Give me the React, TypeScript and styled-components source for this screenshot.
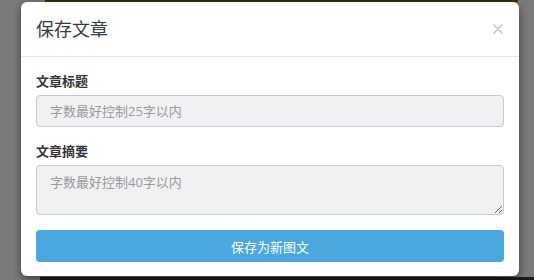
import React from "react";
import styled, { createGlobalStyle } from "styled-components";

const Global = createGlobalStyle`
  html, body { margin: 0; padding: 0; }
  body {
    width: 534px;
    height: 280px;
    overflow: hidden;
    background: #7a7a7a;
    font-family: "Open Sans", "Noto Sans CJK SC", sans-serif;
  }
`;

const Page = styled.div`
  position: relative;
  width: 534px;
  height: 280px;
  background:
    linear-gradient(#3b2c12, #3b2c12) 45px 0 / 473px 2px no-repeat,
    linear-gradient(#1c1c1c, #1c1c1c) 40px 277px / 494px 3px no-repeat,
    #7a7a7a;
  padding: 2px 15px 0 21px;
  box-sizing: border-box;
`;

const Modal = styled.div`
  width: 498px;
  height: 274px;
  background: #fff;
  border-radius: 6px;
  box-shadow: 0 3px 9px rgba(0, 0, 0, 0.5);
  display: flex;
  flex-direction: column;
  box-sizing: border-box;
`;

const Header = styled.div`
  display: flex;
  align-items: center;
  justify-content: space-between;
  padding: 15px 16px 15px 15px;
  border-bottom: 1px solid #e5e5e5;
`;

const Title = styled.h4`
  margin: 0;
  font-size: 18px;
  line-height: 24px;
  font-weight: 400;
  color: #333a45;
`;

const Close = styled.button`
  border: 0;
  background: transparent;
  padding: 0;
  width: 11px;
  height: 11px;
  display: flex;
  align-items: center;
  justify-content: center;
  color: #c4c4c4;
  cursor: pointer;
`;

const Body = styled.div`
  padding: 15px 15px 14px;
  display: flex;
  flex-direction: column;
`;

const Group = styled.div`
  display: flex;
  flex-direction: column;
  margin-bottom: 15px;
`;

const Label = styled.label`
  font-size: 13px;
  line-height: 18px;
  font-weight: 700;
  color: #333;
  margin-bottom: 5px;
`;

const fieldBase = `
  box-sizing: border-box;
  width: 100%;
  background: #f0f1f3;
  border: 1px solid #c6c9d3;
  border-radius: 4px;
  font-family: "Open Sans", "Noto Sans CJK SC", sans-serif;
  font-size: 13px;
  color: #555;
  outline: none;
  &::placeholder { color: #9a9a9a; }
`;

const Input = styled.input`
  ${fieldBase}
  height: 32px;
  padding: 0 13px;
`;

const TextArea = styled.textarea`
  ${fieldBase}
  height: 50px;
  padding: 6px 13px;
  line-height: 20px;
  resize: vertical;
  display: block;
`;

const SubmitButton = styled.button`
  height: 32px;
  width: 100%;
  border: 0;
  border-radius: 4px;
  background: #4aa8de;
  color: #fff;
  font-family: "Open Sans", "Noto Sans CJK SC", sans-serif;
  font-size: 13px;
  cursor: pointer;
`;

export default function App() {
  return (
    <>
      <Global />
      <Page>
        <Modal>
          <Header>
            <Title>保存文章</Title>
            <Close aria-label="关闭">
              <svg width="10" height="10" viewBox="0 0 10 10">
                <path d="M1 1 L9 9 M9 1 L1 9" stroke="currentColor" strokeWidth="1.6" strokeLinecap="round" />
              </svg>
            </Close>
          </Header>
          <Body>
            <Group>
              <Label>文章标题</Label>
              <Input placeholder="字数最好控制25字以内" />
            </Group>
            <Group>
              <Label>文章摘要</Label>
              <TextArea placeholder="字数最好控制40字以内" />
            </Group>
            <SubmitButton>保存为新图文</SubmitButton>
          </Body>
        </Modal>
      </Page>
    </>
  );
}
